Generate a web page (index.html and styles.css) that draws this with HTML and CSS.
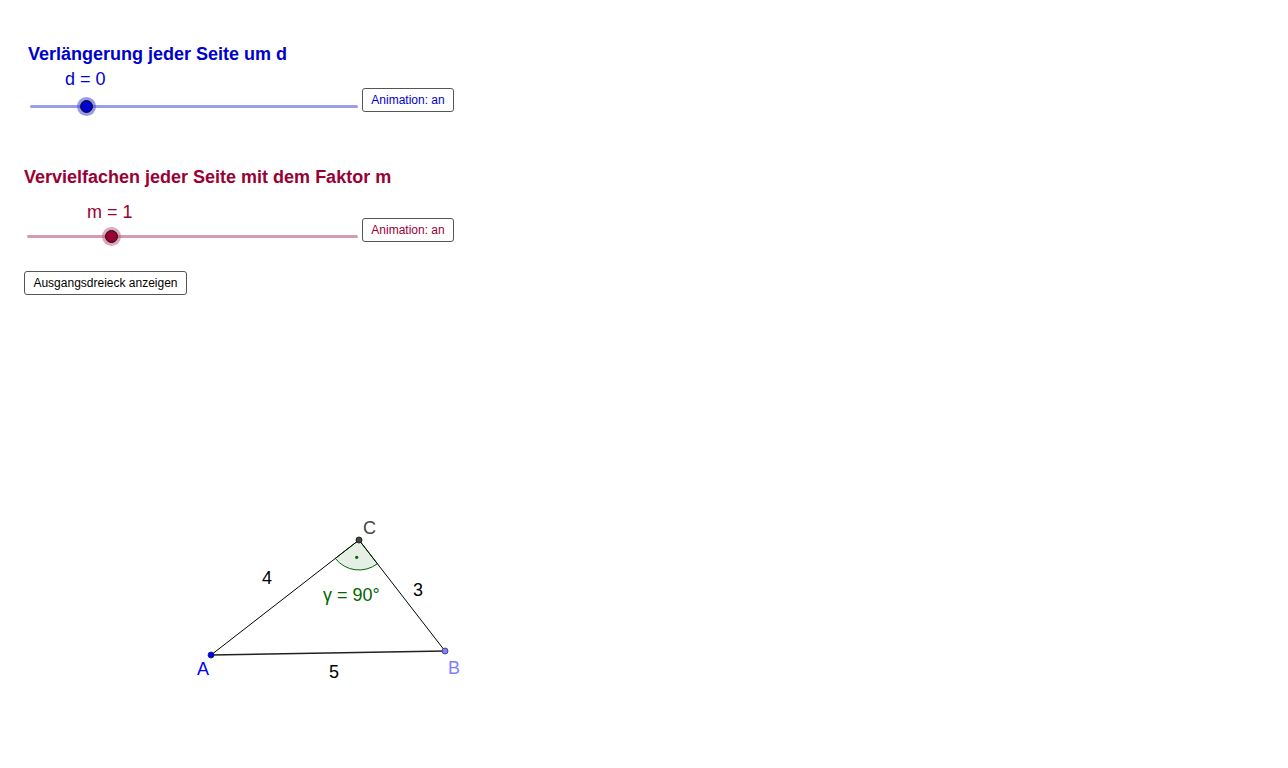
FILE: index.html
```html
<!DOCTYPE html>
<html lang="de">
<head>
<meta charset="utf-8">
<title>Dreieck</title>
<link rel="stylesheet" href="styles.css">
</head>
<body>
<div class="applet">
  <section class="group group-d">
    <h2 class="title title-d">Verlängerung jeder Seite um d</h2>
    <div class="slider-row">
      <div class="slider slider-d">
        <div class="value value-d">d = 0</div>
        <div class="track-wrap track-wrap-d">
          <div class="track track-d"></div>
          <span class="knob knob-d" style="left: 56px"></span>
        </div>
      </div>
      <button class="btn btn-anim btn-d">Animation: an</button>
    </div>
  </section>

  <section class="group group-m">
    <h2 class="title title-m">Vervielfachen jeder Seite mit dem Faktor m</h2>
    <div class="slider-row">
      <div class="slider slider-m">
        <div class="value value-m">m = 1</div>
        <div class="track-wrap track-wrap-m">
          <div class="track track-m"></div>
          <span class="knob knob-m" style="left: 84px"></span>
        </div>
      </div>
      <button class="btn btn-anim btn-m">Animation: an</button>
    </div>
  </section>

  <button class="btn btn-show">Ausgangsdreieck anzeigen</button>

  <svg class="figure" width="300" height="200" viewBox="180 500 300 200" xmlns="http://www.w3.org/2000/svg">
    <path d="M359 540 L335.3 558.4 A30 30 0 0 0 377.4 563.7 Z" fill="rgba(0,100,0,0.1)" stroke="#006400" stroke-width="1"/>
    <circle cx="356.7" cy="557.3" r="1.6" fill="#006400"/>
    <line x1="211" y1="655" x2="445" y2="651" stroke="#222" stroke-width="1.3"/>
    <line x1="211" y1="655" x2="359" y2="540" stroke="#000" stroke-width="1"/>
    <line x1="445" y1="651" x2="359" y2="540" stroke="#000" stroke-width="1"/>
    <circle cx="211" cy="655" r="3" fill="#0000ff" stroke="#1a1a66" stroke-width="0.8"/>
    <circle cx="445" cy="651" r="3" fill="#7f7fff" stroke="#333366" stroke-width="0.8"/>
    <circle cx="359" cy="540" r="3" fill="#444" stroke="#111" stroke-width="0.8"/>
    <text class="lbl lbl-c" x="363" y="534">C</text>
    <text class="lbl lbl-a" x="197" y="675">A</text>
    <text class="lbl lbl-b" x="448" y="674">B</text>
    <text class="lbl lbl-n" x="262" y="584">4</text>
    <text class="lbl lbl-n" x="413" y="596">3</text>
    <text class="lbl lbl-n" x="329" y="678">5</text>
    <text class="lbl lbl-g" x="323" y="601">γ = 90°</text>
  </svg>
</div>
</body>
</html>
```
FILE: styles.css
```css
html, body {
  margin: 0;
  padding: 0;
  background: #ffffff;
}

body {
  font-family: "Liberation Sans", Arial, sans-serif;
}

.applet {
  width: 1288px;
  height: 768px;
  overflow: hidden;
  padding-top: 44px;
  box-sizing: border-box;
}

.group {
  display: flex;
  flex-direction: column;
}

.title {
  margin: 0;
  font-size: 18px;
  line-height: 21px;
  font-weight: bold;
}

.title-d {
  color: #0000cc;
  margin-left: 28px;
}

.title-m {
  color: #990033;
  margin-left: 24px;
}

.group-m {
  margin-top: 49px;
}

.slider-row {
  display: flex;
  align-items: flex-start;
}

.group-d .slider-row {
  margin-top: 4px;
}

.group-m .slider-row {
  margin-top: 14px;
}

.slider {
  display: flex;
  flex-direction: column;
}

.slider-d {
  margin-left: 30px;
  width: 328px;
}

.slider-m {
  margin-left: 27px;
  width: 331px;
}

.value {
  font-size: 18px;
  line-height: 21px;
}

.value-d {
  color: #0000cc;
  margin-left: 35px;
}

.value-m {
  color: #990033;
  margin-left: 60px;
}

.track-wrap {
  position: relative;
  height: 24px;
  display: flex;
  align-items: center;
}

.track-wrap-d {
  margin-top: 4px;
}

.track-wrap-m {
  margin-top: 1px;
}

.track {
  width: 100%;
  height: 3px;
  border-radius: 2px;
}

.track-d {
  background: #9c9ce8;
}

.track-m {
  background: #d99aae;
}

.knob {
  position: absolute;
  top: 12px;
  width: 11px;
  height: 11px;
  margin-left: -6.5px;
  margin-top: -6.5px;
  border-radius: 50%;
  border: 1px solid #111;
}

.knob-d {
  background: #0000cc;
  box-shadow: 0 0 0 3px rgba(70, 70, 220, 0.55);
}

.knob-m {
  background: #990033;
  box-shadow: 0 0 0 3px rgba(190, 80, 120, 0.5);
}

.btn {
  font-family: "Liberation Sans", Arial, sans-serif;
  font-size: 12px;
  line-height: 14px;
  background: #ffffff;
  border: 1px solid #555;
  border-radius: 3px;
  padding: 0;
  height: 24px;
  box-sizing: border-box;
  cursor: pointer;
}

.btn-anim {
  width: 92px;
  margin-left: 4px;
}

.btn-d {
  color: #0000cc;
  margin-top: 19px;
}

.btn-m {
  color: #990033;
  margin-top: 16px;
}

.btn-show {
  display: block;
  color: #000;
  width: 163px;
  margin-left: 24px;
  margin-top: 23px;
}

.figure {
  display: block;
  margin-top: 205px;
  margin-left: 180px;
  overflow: visible;
}

.lbl {
  font-family: "Liberation Sans", Arial, sans-serif;
  font-size: 18px;
}

.lbl-c { fill: #444444; }
.lbl-a { fill: #0000ff; }
.lbl-b { fill: #7f7fff; }
.lbl-n { fill: #000000; }
.lbl-g { fill: #006400; }
```
